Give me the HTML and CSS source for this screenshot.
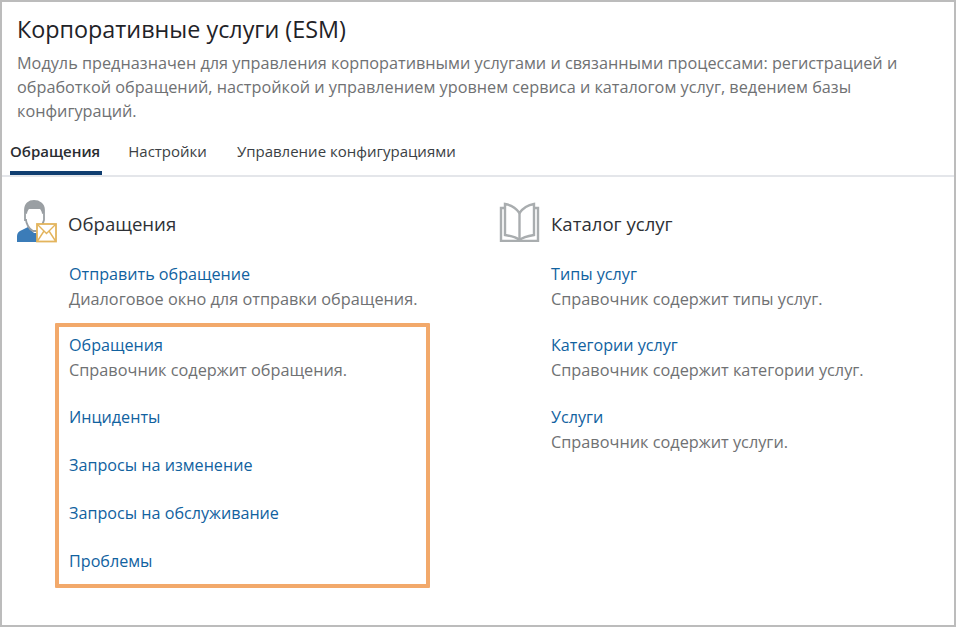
FILE: index.html
```html
<!DOCTYPE html>
<html lang="ru">
<head>
<meta charset="utf-8">
<title>Корпоративные услуги (ESM)</title>
<link rel="stylesheet" href="styles.css">
</head>
<body>
<div class="frame">
  <header class="head">
    <h1 class="title">Корпоративные услуги (ESM)</h1>
    <p class="lead">Модуль предназначен для управления корпоративными услугами и связанными процессами: регистрацией и обработкой обращений, настройкой и управлением уровнем сервиса и каталогом услуг, ведением базы конфигураций.</p>
  </header>
  <nav class="tabs">
    <a class="tab active">Обращения</a>
    <a class="tab">Настройки</a>
    <a class="tab">Управление конфигурациями</a>
  </nav>
  <main class="cols">
    <section class="col col-left">
      <div class="sec-head">
        <svg class="ico" width="44" height="46" viewBox="0 0 44 46">
          <path d="M1 43v-6c0-3 2-5 5-6l6-3 6 6h3v9z" fill="#3b7cb8"/>
          <path d="M12 27c-1-2-2-4-2-6h-1V11c0-6 4-9 9-9s10 3 10 9v10c-1 4-3 8-6 11h-5c-2-1-4-3-5-5z" fill="#fff" stroke="#9a9fa3" stroke-width="1.800"/>
          <path d="M9 14V10c0-5 4-8 9-8s10 3 10 8v4l-2 1c0-2-1-4-2-5-3 0-9 0-11 0-1 1-2 3-2 5z" fill="#9a9fa3"/>
          <rect x="21" y="25" width="19" height="17.500" fill="#fff" stroke="#e3b45c" stroke-width="1.800"/>
          <path d="M21.500 25.500l9 9 9-9M21.500 42l6.500-10M39.500 42l-6.500-10" fill="none" stroke="#e3b45c" stroke-width="1.400"/>
        </svg>
        <h2 class="sec-title">Обращения</h2>
      </div>
      <div class="items">
        <div class="item item-desc"><a class="link">Отправить обращение</a><span class="desc">Диалоговое окно для отправки обращения.</span></div>
        <div class="item item-desc"><a class="link">Обращения</a><span class="desc">Справочник содержит обращения.</span></div>
        <div class="item"><a class="link">Инциденты</a></div>
        <div class="item"><a class="link">Запросы на изменение</a></div>
        <div class="item"><a class="link">Запросы на обслуживание</a></div>
        <div class="item"><a class="link">Проблемы</a></div>
      </div>
      <div class="marker"></div>
    </section>
    <section class="col col-right">
      <div class="sec-head">
        <svg class="ico" width="41" height="40" viewBox="0 0 41 40">
          <path d="M6 6H2v33h37V6h-4" fill="none" stroke="#a9adaf" stroke-width="2.400"/>
          <path d="M20.500 11C17 6 12 3 6 2v31c6 1 11 2 14.500 5 3.500-3 8.500-4 14.500-5V2c-6 1-11 4-14.500 9z" fill="#fff" stroke="#a9adaf" stroke-width="2.400"/>
          <path d="M20.500 11v27" stroke="#a9adaf" stroke-width="2.400"/>
        </svg>
        <h2 class="sec-title">Каталог услуг</h2>
      </div>
      <div class="items">
        <div class="item item-desc"><a class="link">Типы услуг</a><span class="desc">Справочник содержит типы услуг.</span></div>
        <div class="item item-desc"><a class="link">Категории услуг</a><span class="desc">Справочник содержит категории услуг.</span></div>
        <div class="item item-desc"><a class="link">Услуги</a><span class="desc">Справочник содержит услуги.</span></div>
      </div>
    </section>
  </main>
</div>
</body>
</html>
```
FILE: styles.css
```css
* { box-sizing: border-box; }
html, body { margin: 0; height: 100%; }
body { background: #fff; font-family: "Open Sans", "Noto Sans", sans-serif; }
.frame { width: 956px; height: 627px; border: 2px solid #bcbcbc; overflow: hidden; background: #fff; }
.head { padding: 11px 40px 0 15px; }
.title { margin: 0; font-size: 23.350px; line-height: 32px; font-weight: 400; color: #1f2328; }
.lead { margin: 6px 0 0; font-size: 16.250px; line-height: 24px; color: #6f7173; }
.tabs { display: flex; margin-top: 11px; height: 43px; border-bottom: 2px solid #e4e6ea; padding-left: 8px; }
.tab { height: 41px; padding: 7px 0 0; font-size: 15px; line-height: 20px; color: #3b3f44; margin-right: 30px; }
.tab.active { font-weight: 600; color: #2a2d31; border-bottom: 4px solid #0f3e70; padding-right: 2px; margin-right: 26px; }
.cols { display: flex; }
.col { position: relative; }
.col-left { width: 482px; padding: 22px 0 0 14px; }
.col-right { padding: 22px 0 0 15px; }
.sec-head { display: flex; align-items: center; gap: 8px; height: 46px; }
.col-right .sec-head { gap: 11px; }
.sec-title { margin: 0; padding-top: 3px; font-size: 18.600px; line-height: 24px; font-weight: 400; color: #2e3136; }
.items { display: flex; flex-direction: column; padding: 16.500px 0 0 53px; }
.col-right .items { padding-left: 52px; }
.item { height: 48px; font-size: 16.150px; line-height: 24px; }
.item-desc { height: 71.500px; }
.link { display: block; color: #11629f; }
.desc { display: block; font-size: 16.300px; color: #6f7173; line-height: 26px; }
.marker { position: absolute; left: 53px; top: 146px; width: 375px; height: 265px; border: 4px solid #f2a96b; border-radius: 1px; pointer-events: none; }
```
